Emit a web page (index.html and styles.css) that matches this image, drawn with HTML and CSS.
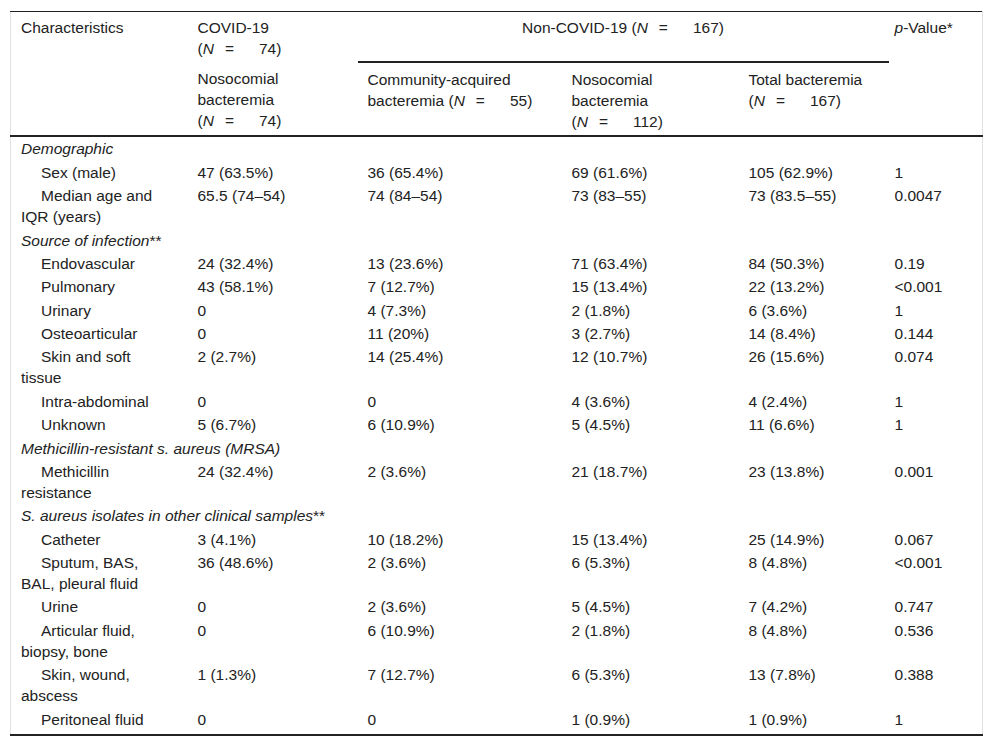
FILE: index.html
```html
<!DOCTYPE html>
<html lang="en">
<head>
<meta charset="utf-8">
<title>Table</title>
<link rel="stylesheet" href="styles.css">
</head>
<body>
<div class="wrap">
<table class="tbl">
  <colgroup>
    <col class="c1"><col class="c2"><col class="c3"><col class="c4"><col class="c5"><col class="c6">
  </colgroup>
  <thead>
    <tr class="h1">
      <th rowspan="2">Characteristics</th>
      <th>COVID-19 <span class="n">(<i>N</i><span class="eq">=</span>74)</span></th>
      <th colspan="3" class="center span">Non-COVID-19 <span class="n">(<i>N</i><span class="eq">=</span>167)</span></th>
      <th rowspan="2" class="pv"><i>p</i>-Value*</th>
    </tr>
    <tr class="h2">
      <th>Nosocomial bacteremia <span class="n">(<i>N</i><span class="eq">=</span>74)</span></th>
      <th><span class="blk">Community-acquired</span><span class="blk">bacteremia <span class="n">(<i>N</i><span class="eq">=</span>55)</span></span></th>
      <th>Nosocomial bacteremia <span class="n">(<i>N</i><span class="eq">=</span>112)</span></th>
      <th>Total bacteremia <span class="n">(<i>N</i><span class="eq">=</span>167)</span></th>
    </tr>
  </thead>
  <tbody>
    <tr><td colspan="6" class="sec"><i>Demographic</i></td></tr>
    <tr><td class="ind">Sex (male)</td><td>47 (63.5%)</td><td>36 (65.4%)</td><td>69 (61.6%)</td><td>105 (62.9%)</td><td class="pv">1</td></tr>
    <tr><td class="ind">Median age and IQR (years)</td><td>65.5 (74–54)</td><td>74 (84–54)</td><td>73 (83–55)</td><td>73 (83.5–55)</td><td class="pv">0.0047</td></tr>
    <tr><td colspan="6" class="sec"><i>Source of infection</i>**</td></tr>
    <tr><td class="ind">Endovascular</td><td>24 (32.4%)</td><td>13 (23.6%)</td><td>71 (63.4%)</td><td>84 (50.3%)</td><td class="pv">0.19</td></tr>
    <tr><td class="ind">Pulmonary</td><td>43 (58.1%)</td><td>7 (12.7%)</td><td>15 (13.4%)</td><td>22 (13.2%)</td><td class="pv">&lt;0.001</td></tr>
    <tr><td class="ind">Urinary</td><td>0</td><td>4 (7.3%)</td><td>2 (1.8%)</td><td>6 (3.6%)</td><td class="pv">1</td></tr>
    <tr><td class="ind">Osteoarticular</td><td>0</td><td>11 (20%)</td><td>3 (2.7%)</td><td>14 (8.4%)</td><td class="pv">0.144</td></tr>
    <tr><td class="ind">Skin and soft tissue</td><td>2 (2.7%)</td><td>14 (25.4%)</td><td>12 (10.7%)</td><td>26 (15.6%)</td><td class="pv">0.074</td></tr>
    <tr><td class="ind">Intra-abdominal</td><td>0</td><td>0</td><td>4 (3.6%)</td><td>4 (2.4%)</td><td class="pv">1</td></tr>
    <tr><td class="ind">Unknown</td><td>5 (6.7%)</td><td>6 (10.9%)</td><td>5 (4.5%)</td><td>11 (6.6%)</td><td class="pv">1</td></tr>
    <tr><td colspan="6" class="sec"><i>Methicillin-resistant s. aureus (MRSA)</i></td></tr>
    <tr><td class="ind">Methicillin resistance</td><td>24 (32.4%)</td><td>2 (3.6%)</td><td>21 (18.7%)</td><td>23 (13.8%)</td><td class="pv">0.001</td></tr>
    <tr><td colspan="6" class="sec"><i>S. aureus isolates in other clinical samples</i>**</td></tr>
    <tr><td class="ind">Catheter</td><td>3 (4.1%)</td><td>10 (18.2%)</td><td>15 (13.4%)</td><td>25 (14.9%)</td><td class="pv">0.067</td></tr>
    <tr><td class="ind">Sputum, BAS, BAL, pleural fluid</td><td>36 (48.6%)</td><td>2 (3.6%)</td><td>6 (5.3%)</td><td>8 (4.8%)</td><td class="pv">&lt;0.001</td></tr>
    <tr><td class="ind">Urine</td><td>0</td><td>2 (3.6%)</td><td>5 (4.5%)</td><td>7 (4.2%)</td><td class="pv">0.747</td></tr>
    <tr><td class="ind">Articular fluid, biopsy, bone</td><td>0</td><td>6 (10.9%)</td><td>2 (1.8%)</td><td>8 (4.8%)</td><td class="pv">0.536</td></tr>
    <tr><td class="ind">Skin, wound, abscess</td><td>1 (1.3%)</td><td>7 (12.7%)</td><td>6 (5.3%)</td><td>13 (7.8%)</td><td class="pv">0.388</td></tr>
    <tr class="last"><td class="ind">Peritoneal fluid</td><td>0</td><td>0</td><td>1 (0.9%)</td><td>1 (0.9%)</td><td class="pv">1</td></tr>
  </tbody>
</table>
</div>
</body>
</html>
```

FILE: styles.css
```css
html, body {
  margin: 0;
  padding: 0;
  background: #ffffff;
}

.wrap {
  padding: 11px 10px 0 10px;
}

.tbl {
  width: 972px;
  table-layout: fixed;
  border-collapse: collapse;
  font-family: "Liberation Sans", Arial, sans-serif;
  font-size: 15.5px;
  line-height: 21px;
  color: #222;
  border-top: 1px solid #222;
  border-bottom: 2px solid #222;
  border-left: 1px solid #e2e2e2;
  border-right: 1px solid #e2e2e2;
}

.c1 { width: 177px; }
.c2 { width: 170px; }
.c3 { width: 204px; }
.c4 { width: 177px; }
.c5 { width: 150px; }
.c6 { width: 94px; }

.tbl th,
.tbl td {
  text-align: left;
  vertical-align: top;
  font-weight: normal;
  padding: 1.2px 10px 1.2px 10px;
}

.tbl .h1 th {
  padding-top: 5px;
  padding-bottom: 3px;
}

.tbl .h2 th {
  padding-top: 6px;
  padding-bottom: 2.6px;
}

.tbl thead {
  border-bottom: 2px solid #222;
}

.tbl th.span {
  text-align: center;
  border-bottom: 2px solid #222;
}

.tbl .pv {
  padding-left: 6px;
}

.tbl td:first-child,
.tbl th:first-child {
  padding-right: 28px;
}

.tbl td.sec {
  padding-right: 10px;
}

.tbl tbody tr:first-child td {
  padding-top: 1.8px;
}

.tbl tr.last td {
  padding-bottom: 4px;
}

.ind {
  text-indent: 20px;
}

.blk {
  display: block;
}

.n {
  white-space: nowrap;
}

.eq {
  display: inline-block;
  margin: 0 25px 0 11px;
}
```
